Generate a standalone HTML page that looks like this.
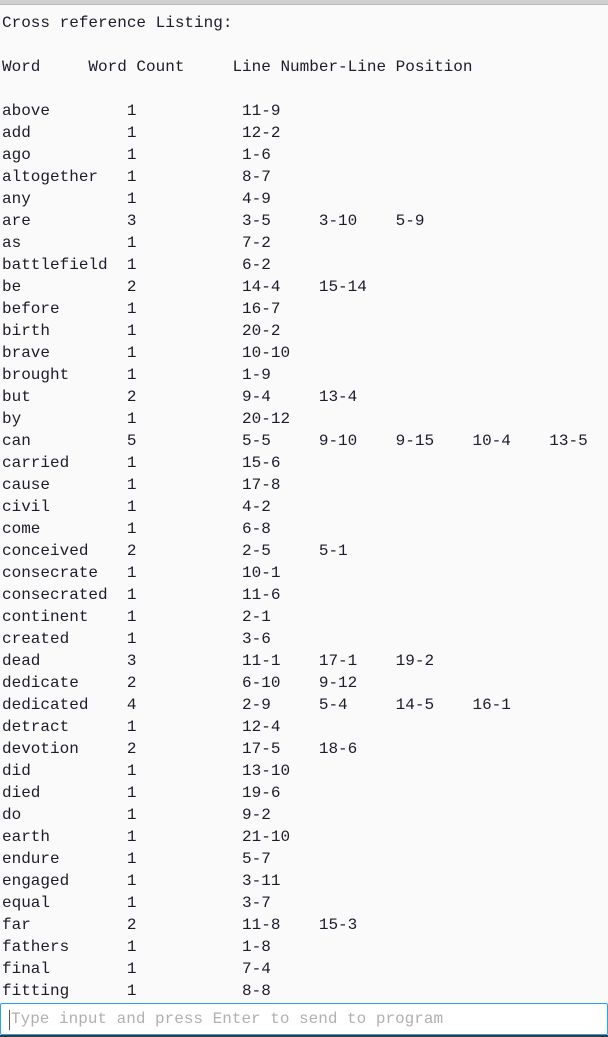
<!DOCTYPE html>
<html><head><meta charset="utf-8"><style>
html,body{margin:0;padding:0;width:608px;height:1037px;overflow:hidden;background:#fafafa}
.top{height:5px;background:#d0d0d0;border-bottom:1px solid #bbb;box-sizing:border-box}
pre{margin:0;padding:7px 0 0 2px;font:16px/22px "Liberation Mono",monospace;color:#1c1c2a;height:994px;overflow:hidden;box-sizing:border-box}
.inp{position:absolute;left:0;top:1003px;width:608px;height:32px;box-sizing:border-box;border:1px solid #2aa6df;background:#fff;border-radius:2px;font:16px/30px "Liberation Mono",monospace;color:#b0b0b0;padding-left:10px}
.inp:before{content:"";position:absolute;left:8px;top:6px;width:1px;height:20px;background:#555}
.bot{position:absolute;left:0;top:1035px;width:608px;height:2px;background:#3a3a3a}
</style></head><body>
<div class="top"></div>
<pre>Cross reference Listing:

Word     Word Count     Line Number-Line Position

above        1           11-9
add          1           12-2
ago          1           1-6
altogether   1           8-7
any          1           4-9
are          3           3-5     3-10    5-9
as           1           7-2
battlefield  1           6-2
be           2           14-4    15-14
before       1           16-7
birth        1           20-2
brave        1           10-10
brought      1           1-9
but          2           9-4     13-4
by           1           20-12
can          5           5-5     9-10    9-15    10-4    13-5
carried      1           15-6
cause        1           17-8
civil        1           4-2
come         1           6-8
conceived    2           2-5     5-1
consecrate   1           10-1
consecrated  1           11-6
continent    1           2-1
created      1           3-6
dead         3           11-1    17-1    19-2
dedicate     2           6-10    9-12
dedicated    4           2-9     5-4     14-5    16-1
detract      1           12-4
devotion     2           17-5    18-6
did          1           13-10
died         1           19-6
do           1           9-2
earth        1           21-10
endure       1           5-7
engaged      1           3-11
equal        1           3-7
far          2           11-8    15-3
fathers      1           1-8
final        1           7-4
fitting      1           8-8
</pre>
<div class="inp">Type input and press Enter to send to program</div>
<div class="bot"></div>
</body></html>
